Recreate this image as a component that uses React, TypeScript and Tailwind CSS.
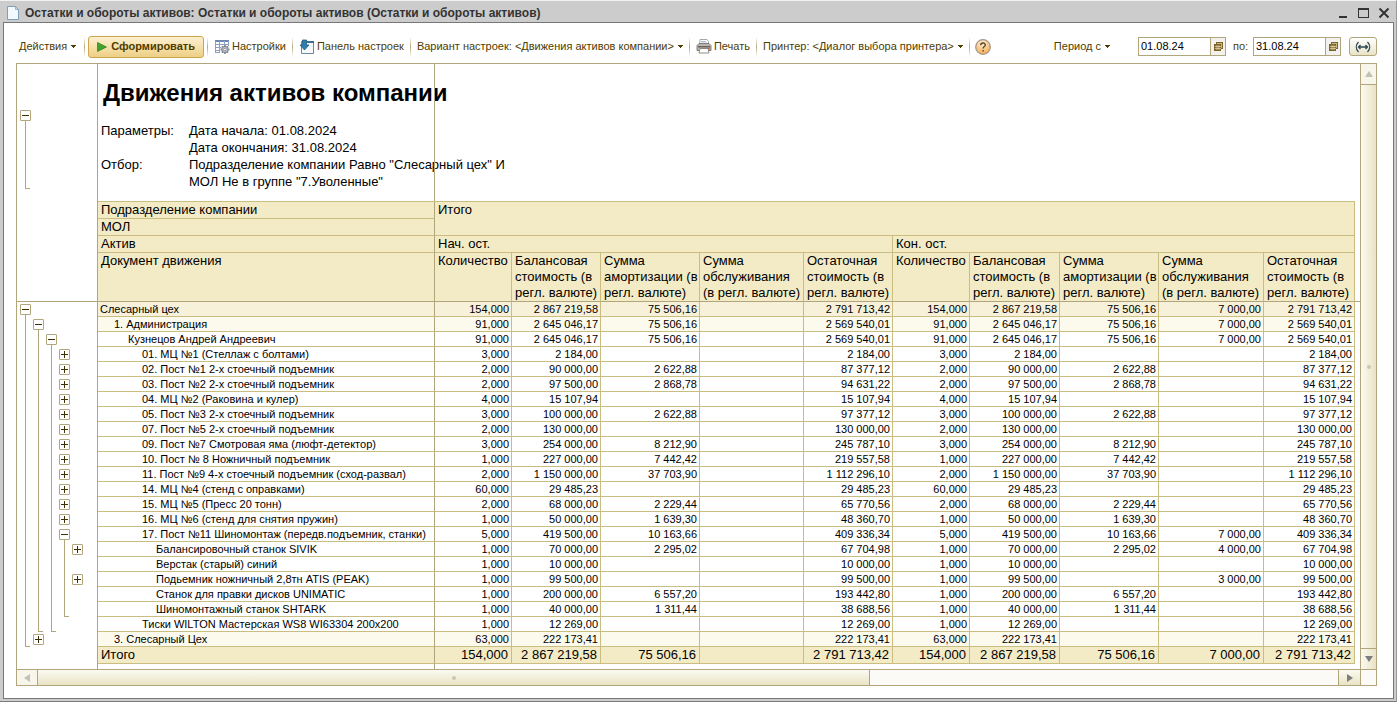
import React from 'react';
import clsx from 'clsx';

interface ReportRow {
  tree: string;
  level: number;
  label: string;
  qty: string;
  cost: string;
  depreciation: string;
  rest: string;
  service: string;
}

const row = (
  tree: string,
  level: number,
  label: string,
  qty: string,
  cost: string,
  depreciation: string,
  rest: string,
  service = ''
): ReportRow => ({ tree, level, label, qty, cost, depreciation, rest, service });

// tree: "-" открытый узел, "+" закрытый узел, "|" линия, "L" конец ветки
const rows: ReportRow[] = [
  row('-', 0, 'Слесарный цех', '154,000', '2 867 219,58', '75 506,16', '2 791 713,42', '7 000,00'),
  row('|-', 1, '1. Администрация', '91,000', '2 645 046,17', '75 506,16', '2 569 540,01', '7 000,00'),
  row('||-', 2, 'Кузнецов Андрей Андреевич', '91,000', '2 645 046,17', '75 506,16', '2 569 540,01', '7 000,00'),
  row('|||+', 3, '01. МЦ №1 (Стеллаж с болтами)', '3,000', '2 184,00', '', '2 184,00'),
  row('|||+', 3, '02. Пост №1 2-х стоечный подъемник', '2,000', '90 000,00', '2 622,88', '87 377,12'),
  row('|||+', 3, '03. Пост №2 2-х стоечный подъемник', '2,000', '97 500,00', '2 868,78', '94 631,22'),
  row('|||+', 3, '04. МЦ №2 (Раковина и кулер)', '4,000', '15 107,94', '', '15 107,94'),
  row('|||+', 3, '05. Пост №3 2-х стоечный подъемник', '3,000', '100 000,00', '2 622,88', '97 377,12'),
  row('|||+', 3, '07. Пост №5 2-х стоечный подъемник', '2,000', '130 000,00', '', '130 000,00'),
  row('|||+', 3, '09. Пост №7 Смотровая яма (люфт-детектор)', '3,000', '254 000,00', '8 212,90', '245 787,10'),
  row('|||+', 3, '10. Пост № 8 Ножничный подъемник', '1,000', '227 000,00', '7 442,42', '219 557,58'),
  row('|||+', 3, '11. Пост №9 4-х стоечный подъемник (сход-развал)', '2,000', '1 150 000,00', '37 703,90', '1 112 296,10'),
  row('|||+', 3, '14. МЦ №4 (стенд с оправками)', '60,000', '29 485,23', '', '29 485,23'),
  row('|||+', 3, '15. МЦ №5 (Пресс 20 тонн)', '2,000', '68 000,00', '2 229,44', '65 770,56'),
  row('|||+', 3, '16. МЦ №6 (стенд для снятия пружин)', '1,000', '50 000,00', '1 639,30', '48 360,70'),
  row('|||-', 3, '17. Пост №11 Шиномонтаж (передв.подъемник, станки)', '5,000', '419 500,00', '10 163,66', '409 336,34', '7 000,00'),
  row('||||+', 4, 'Балансировочный станок SIVIK', '1,000', '70 000,00', '2 295,02', '67 704,98', '4 000,00'),
  row('||||', 4, 'Верстак (старый) синий', '1,000', '10 000,00', '', '10 000,00'),
  row('||||+', 4, 'Подьемник ножничный 2,8тн ATIS (PEAK)', '1,000', '99 500,00', '', '99 500,00', '3 000,00'),
  row('||||', 4, 'Станок для правки дисков UNIMATIC', '1,000', '200 000,00', '6 557,20', '193 442,80'),
  row('|||L', 4, 'Шиномонтажный станок SHTARK', '1,000', '40 000,00', '1 311,44', '38 688,56'),
  row('|LL', 3, 'Тиски WILTON Мастерская WS8 WI63304 200x200', '1,000', '12 269,00', '', '12 269,00'),
  row('L+', 1, '3. Слесарный Цех', '63,000', '222 173,41', '', '222 173,41'),
];

const total = row('', 0, 'Итого', '154,000', '2 867 219,58', '75 506,16', '2 791 713,42', '7 000,00');

const indents = ['pl-[2px]', 'pl-4', 'pl-[30px]', 'pl-11', 'pl-[58px]'];
const fills = ['bg-[#f7f1da]', 'bg-[#fcf9ed]', 'bg-white', 'bg-white', 'bg-white'];

const measures = [
  'Количество',
  'Балансовая стоимость (в регл. валюте)',
  'Сумма амортизации (в регл. валюте)',
  'Сумма обслуживания (в регл. валюте)',
  'Остаточная стоимость (в регл. валюте)',
];

const cellValues = (r: ReportRow) => [
  r.qty, r.cost, r.depreciation, '', r.rest,
  r.qty, r.cost, r.depreciation, r.service, r.rest,
];

const TreeToggle: React.FC<{ open: boolean }> = ({ open }) => (
  <button
    type="button"
    aria-label={open ? 'Свернуть' : 'Развернуть'}
    className="block size-[11px] shrink-0 rounded-[1px] border border-[#b1a57c] bg-white"
  >
    <svg viewBox="0 0 9 9" className="size-[9px]" shapeRendering="crispEdges">
      <path d={open ? 'M1 4h7v1h-7z' : 'M1 4h7v1h-7zM4 1h1v7h-1z'} fill="#3c3000" />
    </svg>
  </button>
);

const TreeCell: React.FC<{ kind: string }> = ({ kind }) => {
  if (kind === '+' || kind === '-') {
    return (
      <div className="flex h-[15px] w-[13px] flex-col items-center pt-[2px]">
        <TreeToggle open={kind === '-'} />
        {kind === '-' && <div className="h-[2px] w-px bg-[#b1a57c]" />}
      </div>
    );
  }
  return (
    <div className="h-[15px] w-[13px] pl-[6px]">
      <div className={clsx('h-full w-[5px] border-l border-[#b1a57c]', kind === 'L' && 'border-b')} />
    </div>
  );
};

const Separator = () => (
  <div className="h-5 w-px shrink-0 bg-linear-to-b from-white via-[#b9ab7c] to-white" />
);

const Caret = () => (
  <svg viewBox="0 0 5 3" className="h-[3px] w-[5px] shrink-0" shapeRendering="crispEdges">
    <path d="M0 0h5v1h-5zM1 1h3v1h-3zM2 2h1v1h-1z" fill="#4f3c00" />
  </svg>
);

const PageIcon = () => (
  <svg viewBox="0 0 12 14" className="h-[14px] w-3">
    <path d="M.5.5h8l3 3v10h-11z" fill="#f1f8fe" stroke="#7f9fb8" />
    <path d="M8.500.5v3h3z" fill="#c8dcea" stroke="#7f9fb8" strokeWidth=".7" />
  </svg>
);

const SettingsIcon = () => (
  <svg viewBox="0 0 16 16" className="size-4">
    <path d="M1 1h13v12H1z" fill="#fff" />
    <path d="M1 1h14v2H1z" fill="#6d87b4" />
    <path d="M1.500 2v12M5.500 2v12M10.500 2v5M1 5.500h13M1 8.500h6M1 11.500h5M14.500 2v5M1 13.500h5" stroke="#8ba0c4" fill="none" />
    <path d="M11 6v9M6.500 10.500h9M7.800 7.300l6.400 6.400M14.200 7.300l-6.400 6.400" stroke="#8b8f98" strokeWidth="1.800" />
    <circle cx="11" cy="10.500" r="3.200" fill="#b9bcc4" stroke="#83868f" />
    <circle cx="11" cy="10.500" r="1.200" fill="#fff" stroke="#777b86" strokeWidth=".6" />
  </svg>
);

const PanelIcon = () => (
  <svg viewBox="0 0 16 16" className="size-4">
    <path d="M2.500 2.500h12v12h-12z" fill="#f6fafc" stroke="#6f8796" />
    <path d="M8 2h7v2H8z" fill="#3f6f94" />
    <path d="M3.500 1h4v5h2.500L5.500 11 1 6h2.500z" fill="#2f7fae" stroke="#1d5c86" strokeWidth=".8" />
  </svg>
);

const PrinterIcon = () => (
  <svg viewBox="0 0 16 15" className="h-[15px] w-4">
    <path d="M4 .500h7l1.500 2V6h-9z" fill="#fff" stroke="#8c93a0" strokeWidth=".8" />
    <path d="M5 2.500h5M5 4.200h6" stroke="#8fa7c6" strokeWidth=".8" />
    <path d="M1 6.500l2-2h10l2 2v5H1z" fill="#b9b6b0" stroke="#6d6963" strokeWidth=".8" />
    <path d="M2 7h12v1.500H2z" fill="#6b645c" />
    <path d="M4 9.500h8l1 4.500H3z" fill="#fff" stroke="#77736c" strokeWidth=".8" />
    <circle cx="13" cy="9.800" r=".8" fill="#c44a2c" />
  </svg>
);

const HelpIcon = () => (
  <svg viewBox="0 0 16 16" className="size-4">
    <defs>
      <radialGradient id="helpFill" cx="45%" cy="25%" r="75%">
        <stop offset="0%" stopColor="#fff0d8" />
        <stop offset="100%" stopColor="#f5ad52" />
      </radialGradient>
    </defs>
    <circle cx="8" cy="8" r="7.300" fill="url(#helpFill)" stroke="#a39589" strokeWidth="1.200" />
    <path d="M5.700 6.200c0-3 4.600-2.900 4.600-.2 0 1.600-2.200 1.500-2.200 3.500M8.100 11v1.500" fill="none" stroke="#5b4526" strokeWidth="1.400" />
  </svg>
);

const CalendarIcon = () => (
  <svg viewBox="0 0 9 9" className="size-[9px]">
    <path d="M2 0h7v7H7v2H0V2h2z" fill="#7d6527" />
    <path d="M1 4.500h6M1 6.500h6M3 3v5M5 3v5M3 1.500h5M7.500 2v4" stroke="#e5dab3" strokeWidth=".7" />
  </svg>
);

const DateField: React.FC<{ label: string; value: string }> = ({ label, value }) => (
  <div className="flex h-[19px] w-22 border border-[#b1a57c] bg-white">
    <input
      type="text"
      aria-label={label}
      defaultValue={value}
      className="w-0 flex-1 pl-[2px] text-[11px] text-black outline-none"
    />
    <button type="button" aria-label="Выбрать дату" className="flex w-[15px] items-center justify-center border-l border-[#b1a57c] bg-[#f3f1ee]">
      <CalendarIcon />
    </button>
  </div>
);

const arrows = {
  up: 'M4 1l4 6H0z',
  down: 'M4 7l4-6H0z',
  left: 'M1 4l6-4v8z',
  right: 'M7 4L1 0v8z',
};

const ScrollButton: React.FC<{ dir: keyof typeof arrows; label: string; dim?: boolean; className: string }> = ({ dir, label, dim, className }) => (
  <button type="button" aria-label={label} className={clsx('flex shrink-0 items-center justify-center border-[#b1a57c]', className)}>
    <svg viewBox="0 0 8 8" className="size-2">
      <path d={arrows[dir]} fill={dim ? '#c3c0b4' : '#7d7d7d'} />
    </svg>
  </button>
);

const Toolbar = () => (
  <div className="flex h-10 items-center pt-[7px] pr-4 pl-[15px] text-[11px] whitespace-nowrap text-[#4f3c00]">
    <button type="button" className="flex items-center gap-1 pr-2">
      Действия <Caret />
    </button>
    <Separator />
    <button
      type="button"
      className="mx-[3px] flex h-[22px] items-center gap-1 rounded-[3px] border border-[#cfa64e] bg-linear-to-b from-[#fbf0d0] via-[#f6e1ab] to-[#edce84] px-2 font-bold"
    >
      <svg viewBox="0 0 10 10" className="size-[10px]">
        <path d="M.5.5v9L9.500 5z" fill="#3fa32c" stroke="#2d7d25" strokeWidth=".7" />
      </svg>
      Сформировать
    </button>
    <Separator />
    <button type="button" className="flex items-center gap-[2px] px-[6px]">
      <SettingsIcon /> Настройки
    </button>
    <Separator />
    <button type="button" className="flex items-center gap-[2px] px-[6px]">
      <PanelIcon /> Панель настроек
    </button>
    <Separator />
    <button type="button" className="flex items-center gap-1 px-[6px]">
      Вариант настроек: &lt;Движения активов компании&gt; <Caret />
    </button>
    <Separator />
    <button type="button" className="flex items-center gap-[2px] px-[6px]">
      <PrinterIcon /> Печать
    </button>
    <Separator />
    <button type="button" className="flex items-center gap-1 px-[6px]">
      Принтер: &lt;Диалог выбора принтера&gt; <Caret />
    </button>
    <Separator />
    <button type="button" aria-label="Справка" className="px-[5px]">
      <HelpIcon />
    </button>
    <div className="ml-auto flex items-center">
      <button type="button" className="mr-7 flex items-center gap-1">
        Период с <Caret />
      </button>
      <DateField label="Период с" value="01.08.24" />
      <span className="w-[27px] pl-[7px]">по:</span>
      <DateField label="Период по" value="31.08.24" />
      <button
        type="button"
        aria-label="Выбрать период"
        className="ml-2 flex h-[19px] w-7 items-center justify-center rounded-[3px] border border-[#b1a57c] bg-linear-to-b from-white to-[#e9e4c6]"
      >
        <svg viewBox="0 0 16 12" className="h-3 w-4" fill="none" stroke="#2f4656" strokeWidth="1.300">
          <path d="M3.500 1C.6 4 .6 8 3.500 11M12.500 1c2.900 3 2.900 7 0 10M3.500 6h9M5.500 4l-2 2 2 2M10.500 4l2 2-2 2" />
        </svg>
      </button>
    </div>
  </div>
);

const headCell = 'border-r border-b border-[#c9bd82] bg-[#f3ebc6] pl-[3px] text-left align-top font-normal';

const Report = () => (
  <table className="w-full table-fixed border-separate border-spacing-0 text-[11px] leading-[14px] text-black">
    <colgroup>
      <col className="w-[81px]" />
      <col className="w-[337px]" />
      <col className="w-[77px]" />
      <col className="w-[89px]" />
      <col className="w-[99px]" />
      <col className="w-[104px]" />
      <col className="w-[89px]" />
      <col className="w-[77px]" />
      <col className="w-[90px]" />
      <col className="w-[99px]" />
      <col className="w-[105px]" />
      <col className="w-[91px]" />
      <col />
    </colgroup>
    <thead className="text-[13px] leading-4">
      <tr>
        <td rowSpan={5} className="border-r border-b border-[#b1a57c] pt-[46px] pl-[3px] align-top">
          <TreeToggle open />
          <div className="ml-[5px] h-[68px] w-[5px] border-b border-l border-[#b1a57c]" />
        </td>
        <td colSpan={11} className="relative h-[138px] border-b border-[#c9bd82] pl-[3px] align-top">
          <h1 className="pt-[15px] pl-[2px] text-[24px] leading-7 font-bold">Движения активов компании</h1>
          <dl className="mt-[15px] grid grid-cols-[88px_1fr] leading-[17px]">
            <dt>Параметры:</dt>
            <dd>
              Дата начала: 01.08.2024
              <br />
              Дата окончания: 31.08.2024
            </dd>
            <dt>Отбор:</dt>
            <dd>
              Подразделение компании Равно "Слесарный цех" И
              <br />
              МОЛ Не в группе "7.Уволенные"
            </dd>
          </dl>
          {/* линия закрепления области */}
          <div className="absolute inset-y-0 left-[336px] w-px bg-[#b1a57c]" />
        </td>
        <td />
      </tr>
      <tr>
        <th className={clsx(headCell, 'border-r-[#b1a57c]')}>Подразделение компании</th>
        <th colSpan={10} rowSpan={2} className={headCell}>Итого</th>
        <td />
      </tr>
      <tr>
        <th className={clsx(headCell, 'border-r-[#b1a57c]')}>МОЛ</th>
        <td />
      </tr>
      <tr>
        <th className={clsx(headCell, 'border-r-[#b1a57c]')}>Актив</th>
        <th colSpan={5} className={headCell}>Нач. ост.</th>
        <th colSpan={5} className={headCell}>Кон. ост.</th>
        <td />
      </tr>
      <tr>
        <th className={clsx(headCell, 'border-r-[#b1a57c] border-b-[#b1a57c]')}>Документ движения</th>
        {[...measures, ...measures].map((name, i) => (
          <th key={i} className={clsx(headCell, 'border-b-[#b1a57c]')}>{name}</th>
        ))}
        <td className="border-b border-[#b1a57c]" />
      </tr>
    </thead>
    <tbody>
      {rows.map(r => (
        <tr key={r.label} className={fills[r.level]}>
          <td className="border-r border-[#b1a57c] bg-white pl-[2px]">
            <div className="flex">
              {r.tree.split('').map((kind, i) => <TreeCell key={i} kind={kind} />)}
            </div>
          </td>
          <td className={clsx('border-r border-b border-r-[#b1a57c] border-b-[#c9bd82] whitespace-nowrap', indents[r.level])}>{r.label}</td>
          {cellValues(r).map((value, i) => (
            <td key={i} className="border-r border-b border-[#c9bd82] pr-[2px] text-right whitespace-nowrap">{value}</td>
          ))}
          <td className="bg-white" />
        </tr>
      ))}
    </tbody>
    <tfoot className="bg-[#f3ebc6] text-[13px] leading-4">
      <tr>
        <td className="border-r border-[#b1a57c] bg-white" />
        <td className="border-r border-b border-r-[#b1a57c] border-b-[#c9bd82] pl-[3px]">{total.label}</td>
        {cellValues(total).map((value, i) => (
          <td key={i} className="border-r border-b border-[#c9bd82] pr-[3px] text-right whitespace-nowrap">{value}</td>
        ))}
        <td className="bg-white" />
      </tr>
    </tfoot>
  </table>
);

const App: React.FC = () => (
  <div className="flex min-h-screen flex-col border-t border-r border-b border-t-[#f2f2f2] border-r-[#9a9a9a] border-b-[#7d7d7d] bg-[#cccccc] pr-[2px] pb-[2px] pl-[3px] font-['Liberation_Sans',Arial,sans-serif]">
    <header className="flex h-[21px] items-center pt-[2px] pl-1">
      <PageIcon />
      <h2 className="pl-[6px] text-[12px] font-bold whitespace-nowrap text-[#333333]">
        Остатки и обороты активов: Остатки и обороты активов (Остатки и обороты активов)
      </h2>
      <div className="ml-auto flex gap-[9px] pr-1 text-[#333333]">
        <button type="button" aria-label="Свернуть окно">
          <svg viewBox="0 0 12 12" className="size-3"><path d="M3 9h8v2H3z" fill="currentColor" /></svg>
        </button>
        <button type="button" aria-label="Развернуть окно">
          <svg viewBox="0 0 12 12" className="size-3" shapeRendering="crispEdges"><path d="M1 1h11v10H1zM2 3v7h9V3z" fillRule="evenodd" fill="currentColor" /></svg>
        </button>
        <button type="button" aria-label="Закрыть окно">
          <svg viewBox="0 0 12 12" className="size-3"><path d="M1.500 1.500l9 9M10.500 1.500l-9 9" stroke="currentColor" strokeWidth="2" /></svg>
        </button>
      </div>
    </header>
    <div className="flex flex-1 flex-col border border-[#777777] bg-white">
      <Toolbar />
      <main className="mr-4 mb-3 ml-3 flex flex-1 flex-col border border-[#b1a57c]">
        <div className="flex flex-1">
          <div className="flex min-w-0 flex-1 flex-col overflow-hidden">
            <Report />
            <div className="flex flex-1">
              <div className="w-[81px] border-r border-[#b1a57c]" />
              <div className="w-[337px] border-r border-[#b1a57c]" />
            </div>
          </div>
          <div className="flex w-4 flex-col border-l border-[#b1a57c] bg-linear-to-r from-[#fbfaf2] to-[#e9e3c4]">
            <ScrollButton dir="up" label="Вверх" dim className="h-[21px] border-b bg-[#f8f6ea]" />
            <div className="flex flex-1 items-center justify-center">
              <div className="size-1 rounded-full bg-[#cdc7b2]" />
            </div>
            <ScrollButton dir="down" label="Вниз" className="h-[21px] border-t" />
          </div>
        </div>
        <div className="flex h-4 border-t border-[#b1a57c] bg-[#fbfaf6]">
          <ScrollButton dir="left" label="Влево" dim className="w-[21px] border-r bg-[#f8f6ea]" />
          <div className="flex flex-1">
            <div className="flex w-16/25 items-center justify-center border-r border-[#b1a57c] bg-linear-to-b from-[#fbfaf2] to-[#e9e3c4]">
              <div className="size-1 rounded-full bg-[#cdc7b2]" />
            </div>
          </div>
          <ScrollButton dir="right" label="Вправо" className="w-[22px] border-l bg-linear-to-b from-[#fbfaf2] to-[#e9e3c4]" />
          <div className="w-4 border-l border-[#b1a57c]" />
        </div>
      </main>
    </div>
  </div>
);

export default App;
